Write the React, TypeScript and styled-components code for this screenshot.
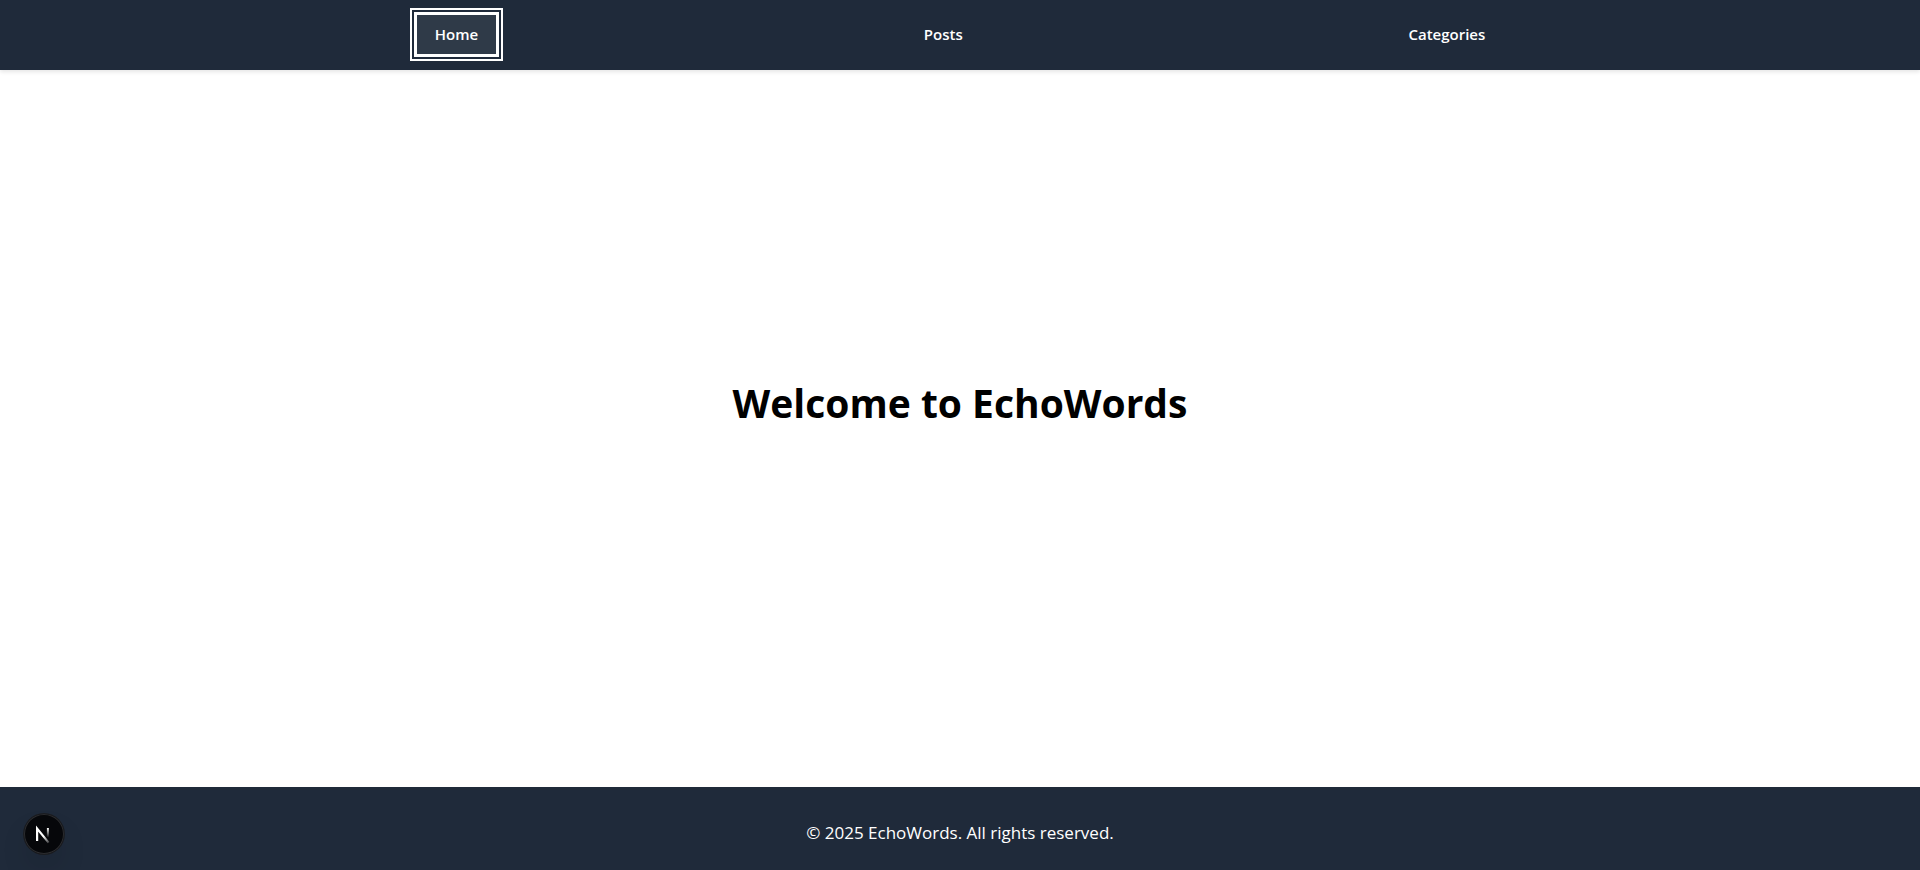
import React from "react";
import styled, { createGlobalStyle } from "styled-components";

const GlobalStyle = createGlobalStyle`
  * {
    box-sizing: border-box;
  }
  body {
    margin: 0;
    background: #ffffff;
    color: #000000;
    font-family: "Segoe UI", "Open Sans", "Noto Sans", sans-serif;
  }
`;

const Page = styled.div`
  display: flex;
  flex-direction: column;
  min-height: 100vh;
`;

const Header = styled.header`
  background: #1f2a3a;
  box-shadow: 0 2px 4px rgba(0, 0, 0, 0.1);
`;

const NavList = styled.nav`
  display: flex;
  justify-content: space-evenly;
  align-items: center;
  padding: 12px 10px 13px;
`;

const NavLink = styled.a<{ $active?: boolean }>`
  padding: 9px 18px;
  border: 3px solid ${(p) => (p.$active ? "#ffffff" : "transparent")};
  outline: ${(p) => (p.$active ? "2px solid #ffffff" : "none")};
  outline-offset: 2px;
  background: ${(p) => (p.$active ? "#2f3a48" : "transparent")};
  color: #ffffff;
  font-size: 15px;
  font-weight: 600;
  line-height: 21px;
  text-decoration: none;
`;

const Main = styled.main`
  display: flex;
  flex: 1;
  align-items: center;
  justify-content: center;
  padding: 0 16px 52px;
`;

const Title = styled.h1`
  margin: 0;
  font-size: 39px;
  font-weight: 700;
  line-height: 48px;
`;

const Footer = styled.footer`
  padding: 32px 16px 24px;
  background: #1f2a3a;
  color: #ffffff;
  font-size: 17px;
  line-height: 27px;
  text-align: center;
`;

const Copyright = styled.p`
  margin: 0;
`;

const DevButton = styled.button`
  position: fixed;
  left: 24px;
  bottom: 16px;
  display: flex;
  align-items: center;
  justify-content: center;
  width: 40px;
  height: 40px;
  padding: 0;
  border: 0;
  border-radius: 50%;
  background: #06070a;
  box-shadow: inset 0 0 0 1px #2b2c2f, 0 0 0 1px #1a1c20,
    0 16px 32px -8px rgba(0, 0, 0, 0.24);
`;

export default function App() {
  return (
    <Page>
      <GlobalStyle />
      <Header>
        <NavList aria-label="Main">
          <NavLink href="#home" $active aria-current="page">
            Home
          </NavLink>
          <NavLink href="#posts">Posts</NavLink>
          <NavLink href="#categories">Categories</NavLink>
        </NavList>
      </Header>
      <Main>
        <Title>Welcome to EchoWords</Title>
      </Main>
      <Footer>
        <Copyright>© 2025 EchoWords. All rights reserved.</Copyright>
      </Footer>
      <DevButton type="button" aria-label="Open developer tools">
        <svg width="40" height="40" viewBox="0 0 40 40" fill="none" aria-hidden="true">
          <defs>
            <linearGradient id="diagonal" x1="20" y1="22" x2="25.5" y2="29" gradientUnits="userSpaceOnUse">
              <stop stopColor="#fff" />
              <stop offset="1" stopColor="#fff" stopOpacity="0.15" />
            </linearGradient>
            <linearGradient id="stem" x1="24" y1="14" x2="24" y2="23.5" gradientUnits="userSpaceOnUse">
              <stop stopColor="#fff" />
              <stop offset="1" stopColor="#fff" stopOpacity="0" />
            </linearGradient>
          </defs>
          <path d="M13.1 27V14.6L24.6 28.6" stroke="url(#diagonal)" strokeWidth="2.2" />
          <path d="M23.9 14V23.5" stroke="url(#stem)" strokeWidth="2" />
        </svg>
      </DevButton>
    </Page>
  );
}
